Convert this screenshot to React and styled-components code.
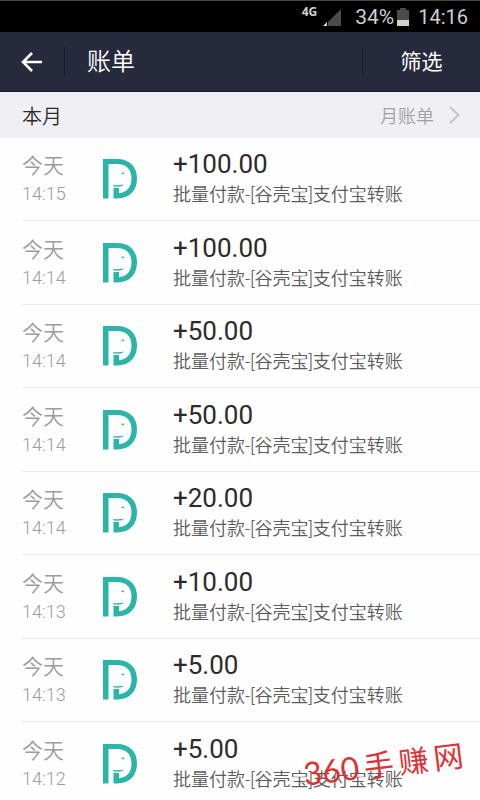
import styled, { createGlobalStyle } from "styled-components";

const bills = [
  { id: 1, day: "今天", time: "14:15", amount: "+100.00" },
  { id: 2, day: "今天", time: "14:14", amount: "+100.00" },
  { id: 3, day: "今天", time: "14:14", amount: "+50.00" },
  { id: 4, day: "今天", time: "14:14", amount: "+50.00" },
  { id: 5, day: "今天", time: "14:14", amount: "+20.00" },
  { id: 6, day: "今天", time: "14:13", amount: "+10.00" },
  { id: 7, day: "今天", time: "14:13", amount: "+5.00" },
  { id: 8, day: "今天", time: "14:12", amount: "+5.00" },
];

export default function App() {
  return (
    <>
      <GlobalStyle />
      <Screen>
        <StatusBar>
          <Network>4G</Network>
          <SignalIcon />
          <Battery>34%</Battery>
          <BatteryIcon />
          <span>14:16</span>
        </StatusBar>
        <Header>
          <BackButton aria-label="返回">
            <BackIcon />
          </BackButton>
          <Title>账单</Title>
          <FilterButton>筛选</FilterButton>
        </Header>
        <MonthBar>
          <MonthName>本月</MonthName>
          <MonthLink href="#month">
            月账单
            <ChevronIcon />
          </MonthLink>
        </MonthBar>
        <BillList>
          {bills.map((bill) => (
            <Bill key={bill.id}>
              <When>
                <Day>{bill.day}</Day>
                <Time>{bill.time}</Time>
              </When>
              <Logo />
              <div>
                <Amount>{bill.amount}</Amount>
                <Description>批量付款-[谷壳宝]支付宝转账</Description>
              </div>
            </Bill>
          ))}
        </BillList>
        <Watermark>
          <WatermarkNumber>360</WatermarkNumber>
          <span>手</span>
          <span>赚</span>
          <span>网</span>
        </Watermark>
      </Screen>
    </>
  );
}

function SignalIcon() {
  return (
    <svg width="18" height="18" viewBox="0 0 18 18">
      <path d="M18 1V18H5V14Z" fill="#4b4b4b" />
      <path d="M4 14V18H0Z" fill="#d8d8d8" />
    </svg>
  );
}

function BatteryIcon() {
  return (
    <svg width="12" height="18" viewBox="0 0 12 18">
      <path d="M3 0H9V2H12V12H0V2H3Z" fill="#4b4b4b" />
      <path d="M0 12H12V18H0Z" fill="#cfcfcf" />
    </svg>
  );
}

function BackIcon() {
  return (
    <svg width="22" height="20" viewBox="0 0 22 20" fill="none">
      <path d="M11 1L2 10L11 19M2 10H21" stroke="#fff" strokeWidth="2.6" />
    </svg>
  );
}

function ChevronIcon() {
  return (
    <svg width="11" height="18" viewBox="0 0 11 18" fill="none">
      <path d="M1 1L9.5 9L1 17" stroke="#c4c4c8" strokeWidth="2" />
    </svg>
  );
}

function Logo() {
  return (
    <svg width="34" height="40" viewBox="0 0 34 40" fill="#2bb5a9">
      <path d="M0 0H14C27 0 34 8 34 19.5C34 31 27 39.5 14 39.5H10.5V29H16V34.3C24 33.5 28.5 28 28.5 19.5C28.5 10 23 5 14 5H5.5V39.5H0Z" />
      <path d="M10 26C14 26.600 17 26.400 21 25.600C19.500 27.500 16 28 10.500 27.600Z" />
      <path d="M17.500 14L21 13.500V15.500Z" />
    </svg>
  );
}

const GlobalStyle = createGlobalStyle`
  * {
    box-sizing: border-box;
  }

  body {
    margin: 0;
    background-color: #fefefe;
    font-family: Roboto, "Noto Sans CJK SC", sans-serif;
  }

  button {
    border: none;
    background: none;
    color: inherit;
    font: inherit;
    cursor: pointer;
  }
`;

const Screen = styled.main`
  position: relative;
  height: 100vh;
  overflow: hidden;
`;

const StatusBar = styled.div`
  display: flex;
  justify-content: flex-end;
  align-items: center;
  height: 32px;
  padding: 0 12px;
  border-top: 1px solid #444;
  background-color: #000;
  color: #cfcfcf;
  font-size: 20px;
`;

const Network = styled.span`
  align-self: flex-start;
  margin-right: 6px;
  font: bold 12px/22px "Open Sans", sans-serif;
`;

const Battery = styled.span`
  margin: 0 3px 0 14px;
  font-size: 21px;

  & + svg {
    margin-right: 9px;
  }
`;

const Header = styled.header`
  display: flex;
  align-items: center;
  height: 60px;
  border-bottom: 1px solid #1a1c2b;
  background-color: #272a3d;
  color: #fff;
`;

const BackButton = styled.button`
  display: flex;
  justify-content: center;
  align-items: center;
  width: 65px;
  height: 30px;
  border-right: 1px solid #1a1c2b;
`;

const Title = styled.h1`
  flex: 1;
  margin: 0;
  padding-left: 22px;
  font-size: 24px;
  font-weight: 350;
  line-height: 30px;
`;

const FilterButton = styled.button`
  width: 118px;
  height: 30px;
  padding: 0;
  border-left: 1px solid #1a1c2b;
  font-size: 21px;
  line-height: 30px;
`;

const MonthBar = styled.div`
  display: flex;
  justify-content: space-between;
  align-items: center;
  height: 46px;
  padding: 0 20px 0 22px;
  background-color: #efeff4;
`;

const MonthName = styled.h2`
  margin: 0;
  color: #2b2b2b;
  font-size: 20px;
  font-weight: 350;
`;

const MonthLink = styled.a`
  display: flex;
  align-items: center;
  gap: 15px;
  color: #a0a0a3;
  font-size: 18px;
  font-weight: 350;
  text-decoration: none;
`;

const BillList = styled.ul`
  margin: 0;
  padding: 0 0 0 22px;
  list-style: none;
`;

const Bill = styled.li`
  display: grid;
  grid-template-columns: 81px 70px 1fr;
  align-items: center;
  height: 84px;
  border-bottom: 1px solid #ececee;

  &:nth-child(odd) {
    height: 83px;
  }
`;

const When = styled.div`
  padding-top: 2px;
  color: #9c9c9c;
`;

const Day = styled.div`
  font-size: 21px;
  font-weight: 350;
  line-height: 28px;
`;

const Time = styled.div`
  font-size: 18px;
  font-weight: 300;
  line-height: 28px;
`;

const Amount = styled.div`
  color: #2b2b2b;
  font-size: 26px;
  line-height: 32px;
`;

const Description = styled.div`
  color: #5c5c5c;
  font-size: 18px;
  font-weight: 350;
  line-height: 30px;
`;

const Watermark = styled.div`
  position: absolute;
  right: 16px;
  bottom: 18px;
  display: flex;
  align-items: center;
  gap: 5px;
  color: #dd3338;
  font-family: Lato, "Noto Sans CJK SC", sans-serif;
  font-size: 30px;
  line-height: 36px;
  transform: rotate(-7deg);
`;

const WatermarkNumber = styled.span`
  font-size: 32px;
`;
